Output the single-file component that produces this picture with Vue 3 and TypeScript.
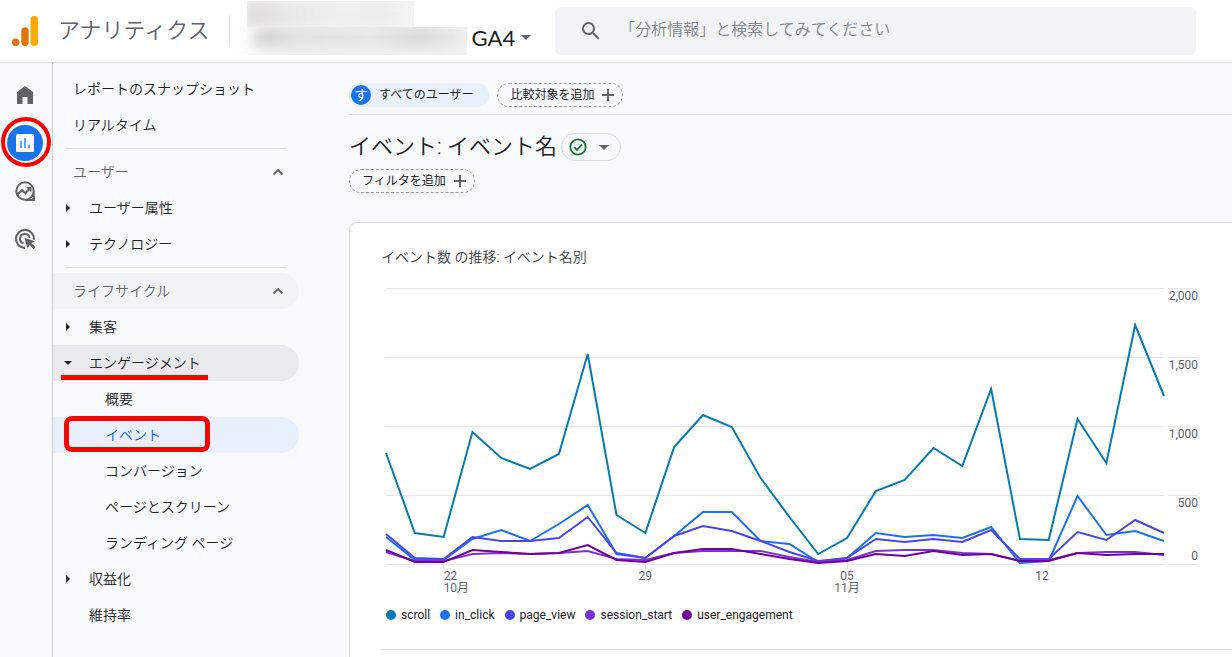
<script setup lang="ts">
interface NavItem {
  label: string
  level: 0 | 1 | 2
  kind?: 'section' | 'closed' | 'open'
  state?: 'hover' | 'parent' | 'current'
  mark?: 'underline' | 'box'
}

const navGroups: NavItem[][] = [
  [
    { label: 'レポートのスナップショット', level: 0 },
    { label: 'リアルタイム', level: 0 },
  ],
  [
    { label: 'ユーザー', level: 0, kind: 'section' },
    { label: 'ユーザー属性', level: 1, kind: 'closed' },
    { label: 'テクノロジー', level: 1, kind: 'closed' },
  ],
  [
    { label: 'ライフサイクル', level: 0, kind: 'section', state: 'hover' },
    { label: '集客', level: 1, kind: 'closed' },
    { label: 'エンゲージメント', level: 1, kind: 'open', state: 'parent', mark: 'underline' },
    { label: '概要', level: 2 },
    { label: 'イベント', level: 2, state: 'current', mark: 'box' },
    { label: 'コンバージョン', level: 2 },
    { label: 'ページとスクリーン', level: 2 },
    { label: 'ランディング ページ', level: 2 },
    { label: '収益化', level: 1, kind: 'closed' },
    { label: '維持率', level: 1 },
  ],
]

interface Series {
  name: string
  color: string
  levels: number[]
}

// Levels are heights above the baseline; PLOT_HEIGHT corresponds to 2,000 events.
const PLOT_HEIGHT = 276
const LAST_DAY = 27

const series: Series[] = [
  {
    name: 'scroll',
    color: '#077bb0',
    levels: [111, 31, 27, 132, 106, 95, 110, 210, 49, 31, 117, 149, 137, 86, 47, 10, 26, 73, 84, 116, 98, 175, 25, 24, 145, 101, 239, 168],
  },
  {
    name: 'in_click',
    color: '#1a73e8',
    levels: [27, 4, 4, 25, 34, 23, 40, 59, 10, 6, 28, 52, 52, 23, 20, 2, 6, 31, 27, 29, 26, 37, 1, 3, 68, 29, 33, 23],
  },
  {
    name: 'page_view',
    color: '#4a45ea',
    levels: [30, 6, 5, 27, 23, 23, 26, 47, 11, 6, 28, 38, 33, 23, 12, 3, 6, 25, 22, 25, 22, 34, 5, 5, 32, 24, 44, 31],
  },
  {
    name: 'session_start',
    color: '#7a33d1',
    levels: [12, 3, 3, 10, 11, 10, 11, 13, 5, 4, 11, 13, 13, 13, 7, 2, 4, 13, 14, 14, 11, 10, 3, 4, 11, 12, 12, 9],
  },
  {
    name: 'user_engagement',
    color: '#72009c',
    levels: [14, 2, 2, 14, 12, 10, 11, 19, 4, 2, 11, 15, 15, 10, 5, 1, 3, 10, 8, 13, 9, 10, 3, 3, 11, 9, 10, 10],
  },
]

const points = (levels: number[]): string =>
  levels.map((v, day) => `${day},${PLOT_HEIGHT - v}`).join(' ')

const gridRows = [0, 69, 138, 207, 276]
const axisLabels = ['2,000', '1,500', '1,000', '500']

const ticks = [
  { day: 2, label: '22', month: '10月', align: 'start' },
  { day: 9, label: '29', month: '', align: 'middle' },
  { day: 16, label: '05', month: '11月', align: 'middle' },
  { day: 23, label: '12', month: '', align: 'end' },
]

const dayOffset = (day: number): string => `${(day / LAST_DAY) * 100}%`
</script>

<template>
  <div class="app">
    <header class="topbar">
      <svg class="logo" viewBox="0 0 26 30" aria-hidden="true">
        <rect x="18.5" y="0" width="7.5" height="30" rx="3.7" fill="#f9ab00" />
        <rect x="9.3" y="11.3" width="7.4" height="18.7" rx="3.7" fill="#e37400" />
        <circle cx="3.7" cy="26.3" r="3.7" fill="#e37400" />
      </svg>
      <span class="product">アナリティクス</span>
      <div class="account" aria-hidden="true">
        <div class="redacted top"><i></i></div>
        <div class="redacted bottom"><i></i></div>
      </div>
      <button class="property" type="button">
        GA4
        <svg viewBox="0 0 10 5" class="caret" aria-hidden="true"><path d="M0 0h10L5 5z" /></svg>
      </button>
      <label class="search">
        <svg viewBox="0 0 24 24" aria-hidden="true">
          <path d="M15.5 14h-.79l-.28-.27A6.47 6.47 0 0 0 16 9.5 6.5 6.5 0 1 0 9.5 16c1.61 0 3.09-.59 4.23-1.57l.27.28v.79l5 4.99L20.49 19l-4.99-5zm-6 0C7.01 14 5 11.99 5 9.5S7.01 5 9.5 5 14 7.01 14 9.5 11.99 14 9.5 14z" />
        </svg>
        <input type="search" aria-label="検索" placeholder="「分析情報」と検索してみてください" />
      </label>
    </header>

    <div class="body">
      <nav class="rail" aria-label="メイン">
        <a href="#home" aria-label="ホーム">
          <svg viewBox="0 0 24 24"><path d="M4 21V9l8-6 8 6v12h-5.500v-7h-5v7z" /></svg>
        </a>
        <a href="#reports" class="active" aria-label="レポート">
          <span class="disc">
            <svg viewBox="0 0 18 18">
              <rect width="18" height="18" rx="1.500" fill="#fff" />
              <path d="M5 7v7M9 4v10M13 10.500v3.500" fill="none" stroke="#1a73e8" stroke-width="1.300" />
            </svg>
          </span>
          <span class="ring"></span>
        </a>
        <a href="#explore" aria-label="探索">
          <svg viewBox="0 0 24 24">
            <path d="M20.700 12.500V21H12.500M20.700 12A8.700 8.700 0 1 1 12 3.300 8.700 8.700 0 0 1 20.700 12z" fill="none" stroke="#5f6368" stroke-width="2" />
            <path d="M17 21.800 21.500 17v4.800z" />
            <path d="M4.500 15.500 9 11.200l3.300 3.100L17 9.200" fill="none" stroke="#5f6368" stroke-width="2.200" />
            <path d="M12.800 7.700h5.700v5.700z" />
          </svg>
        </a>
        <a href="#ads" aria-label="広告">
          <svg viewBox="0 0 24 24">
            <path d="M12 20.900A9 9 0 1 1 20.900 12.800M10.500 16.400A4.800 4.800 0 1 1 16.600 11" fill="none" stroke="#5f6368" stroke-width="2.100" />
            <path d="M11.300 10.800 22 14.300l-3.700 1.800 4.200 4.200-1.900 1.900-4.200-4.200-1.700 3.800z" />
          </svg>
        </a>
      </nav>

      <nav class="sidebar" aria-label="レポート">
        <ul v-for="(group, g) in navGroups" :key="g">
          <li v-for="item in group" :key="item.label">
            <a
              :href="'#' + item.label"
              :class="['item', 'level-' + item.level, item.kind, item.state, item.mark]"
              :aria-current="item.state === 'current' ? 'page' : undefined"
            >
              <svg v-if="item.kind === 'closed'" class="arrow" viewBox="0 0 10 10"><path d="M3 1v8l4-4z" /></svg>
              <svg v-if="item.kind === 'open'" class="arrow" viewBox="0 0 10 10"><path d="M1 3h8L5 7z" /></svg>
              <span>{{ item.label }}</span>
              <svg v-if="item.kind === 'section'" class="chevron" viewBox="0 0 12 8">
                <path d="M1.500 6.500 6 2l4.500 4.500" fill="none" stroke="#5f6368" stroke-width="1.800" />
              </svg>
            </a>
          </li>
        </ul>
      </nav>

      <main class="main">
        <div class="comparisons">
          <button class="chip audience" type="button"><b>す</b>すべてのユーザー</button>
          <button class="chip dashed" type="button">
            比較対象を追加
            <svg viewBox="0 0 12 12" class="plus"><path d="M6 0v12M0 6h12" /></svg>
          </button>
        </div>

        <div class="heading">
          <h1>イベント: イベント名</h1>
          <button class="status" type="button" aria-label="データの状態">
            <svg viewBox="0 0 18 18" class="check">
              <circle cx="9" cy="9" r="7.700" />
              <path d="M5.200 9.200l2.700 2.700 5.200-5.400" />
            </svg>
            <svg viewBox="0 0 10 5" class="caret"><path d="M0 0h10L5 5z" /></svg>
          </button>
        </div>
        <button class="chip dashed" type="button">
          フィルタを追加
          <svg viewBox="0 0 12 12" class="plus"><path d="M6 0v12M0 6h12" /></svg>
        </button>

        <section class="card">
          <h2>イベント数 の推移: イベント名別</h2>
          <div class="chart">
            <div class="plot">
              <svg viewBox="0 0 27 276" preserveAspectRatio="none" role="img" aria-label="イベント数 の推移">
                <line v-for="y in gridRows" :key="y" class="grid" x1="0" x2="27" :y1="y" :y2="y" />
                <line v-for="t in ticks" :key="t.day" class="grid" :x1="t.day" :x2="t.day" y1="276" y2="281" />
                <polyline v-for="s in series" :key="s.name" :points="points(s.levels)" :stroke="s.color" />
              </svg>
              <div class="days">
                <span v-for="t in ticks" :key="t.day" :class="t.align" :style="{ left: dayOffset(t.day) }">
                  {{ t.label }}<br />{{ t.month }}
                </span>
              </div>
            </div>
            <div class="axis">
              <div v-for="label in axisLabels" :key="label"><span>{{ label }}</span></div>
              <span class="zero">0</span>
            </div>
          </div>
          <ul class="legend">
            <li v-for="s in series" :key="s.name"><i :style="{ background: s.color }"></i>{{ s.name }}</li>
          </ul>
          <hr />
        </section>
      </main>
    </div>
  </div>
</template>

<style>
body {
  margin: 0;
  background: #f8f9fb;
}
</style>

<style scoped>
.app {
  display: flex;
  flex-direction: column;
  min-height: 100vh;
  color: #202124;
  font: 14px/20px Roboto, "Noto Sans CJK JP", sans-serif;
}
.app *,
.app *::before,
.app *::after {
  box-sizing: border-box;
}
a {
  color: inherit;
  text-decoration: none;
}
button {
  padding: 0;
  border: 0;
  background: none;
  color: inherit;
  font: inherit;
  cursor: pointer;
}
ul {
  margin: 0;
  padding: 0;
  list-style: none;
}
svg {
  flex: none;
  fill: #5f6368;
}
.caret {
  width: 10px;
  height: 5px;
}

/* Top bar */
.topbar {
  display: flex;
  align-items: center;
  height: 63px;
  padding: 0 36px 0 12px;
  border-bottom: 1px solid #dadce0;
  background: #fff;
}
.logo {
  width: 26px;
  height: 30px;
}
.product {
  margin-left: 20px;
  padding-right: 19px;
  border-right: 1px solid #dadce0;
  color: #5f6368;
  font-size: 22px;
  font-weight: 350;
  line-height: 32px;
  white-space: nowrap;
}
.account {
  width: 232px;
  margin: 1px 5px auto;
}
.redacted {
  overflow: hidden;
}
.redacted i {
  display: block;
  height: 100%;
  filter: blur(6px);
}
.redacted.top {
  width: 167px;
  height: 26px;
  margin-left: 12px;
  background: #f4f4f4;
}
.redacted.top i {
  background: linear-gradient(90deg, #dcd9da, #e8e7e7 24%, #efefef 60%, #ebebeb 80%, #f4f4f4);
}
.redacted.bottom {
  height: 28px;
  background: linear-gradient(90deg, #fff, #f0f0f0 25%, #f2f2f2);
}
.redacted.bottom i {
  height: 20px;
  background: linear-gradient(90deg, #fff 4%, #d2d2d2 12%, #d8d8d8 18%, #e2e2e2 26%, #e6e6e6 60%, #d9d9d9 80%, #eee);
}
.property {
  display: flex;
  align-items: center;
  gap: 6px;
  padding-top: 13px;
  font-family: Lato, sans-serif;
  font-size: 22px;
  line-height: 28px;
}
.search {
  display: flex;
  flex: 1;
  align-items: center;
  gap: 16px;
  height: 48px;
  margin-left: 24px;
  padding: 0 24px;
  border-radius: 6px;
  background: #f1f3f4;
}
.search svg {
  width: 24px;
  height: 24px;
}
.search input {
  flex: 1;
  min-width: 0;
  padding: 0 0 2px;
  border: 0;
  outline: 0;
  background: none;
  font: 350 16px/24px Roboto, "Noto Sans CJK JP", sans-serif;
}
.search input::placeholder {
  color: #80868b;
  opacity: 1;
}

/* Icon rail */
.body {
  display: flex;
  flex: 1;
}
.rail {
  flex: none;
  width: 53px;
  padding: 8px 2px 0 0;
  border-right: 1px solid #c8cacd;
}
.rail a {
  position: relative;
  display: flex;
  align-items: center;
  justify-content: center;
  height: 48px;
}
.rail svg {
  width: 24px;
  height: 24px;
}
.disc {
  display: flex;
  align-items: center;
  justify-content: center;
  width: 36px;
  height: 36px;
  border-radius: 50%;
  background: #1a73e8;
}
.rail .disc svg {
  width: 18px;
  height: 18px;
}
.ring {
  position: absolute;
  inset: -2px -1px 0 1px;
  border: 4px solid #f00;
  border-radius: 50%;
}

/* Report navigation */
.sidebar {
  flex: none;
  width: 246px;
  padding-top: 8px;
  font-weight: 350;
}
.sidebar ul + ul::before {
  content: "";
  display: block;
  height: 1px;
  margin: 5px 12px;
  background: #dadce0;
}
.item {
  position: relative;
  display: flex;
  align-items: center;
  height: 36px;
  padding-right: 15px;
  border-radius: 0 18px 18px 0;
  white-space: nowrap;
}
.level-0 {
  padding-left: 20px;
}
.level-1 {
  padding-left: 36px;
}
.level-2 {
  padding-left: 52px;
}
.section {
  justify-content: space-between;
  color: #5f6368;
}
.hover {
  background: #f1f3f4;
}
.parent {
  background: #e8eaed;
}
.current {
  background: #e8f0fe;
  color: #1967d2;
}
.arrow {
  width: 10px;
  height: 10px;
  margin: 0 16px 0 -26px;
  fill: #202124;
}
.chevron {
  width: 12px;
  height: 8px;
}
.underline::after {
  content: "";
  position: absolute;
  bottom: 1px;
  left: 8px;
  width: 147px;
  height: 5px;
  background: #f00;
}
.box::after {
  content: "";
  position: absolute;
  top: -1px;
  left: 11px;
  width: 146px;
  height: 36px;
  border: 5px solid #f00;
  border-radius: 8px;
}

/* Report */
.main {
  display: flex;
  flex: 1;
  flex-direction: column;
  align-items: flex-start;
  min-width: 0;
  margin-left: 50px;
}
.comparisons {
  display: flex;
  align-self: stretch;
  gap: 8px;
  padding: 20px 0 7px;
  border-bottom: 1px solid #dadce0;
}
.chip {
  display: flex;
  align-items: center;
  height: 24px;
  border-radius: 12px;
  font-size: 12px;
  line-height: 16px;
  white-space: nowrap;
}
.audience {
  gap: 8px;
  padding: 0 16px 0 2px;
  background: #e8f0fe;
}
.audience b {
  width: 20px;
  height: 20px;
  border-radius: 50%;
  background: #1a73e8;
  color: #fff;
  font-size: 14px;
  font-weight: 400;
  line-height: 20px;
}
.dashed {
  gap: 8px;
  padding: 0 8px 0 12px;
  border: 1px dashed #9aa0a6;
}
.plus {
  width: 12px;
  height: 12px;
  stroke: #5f6368;
  stroke-width: 2;
}
.heading {
  display: flex;
  align-items: center;
  gap: 4px;
  margin: 16px 0 6px;
}
h1 {
  margin: 0;
  font-size: 22px;
  font-weight: 350;
  line-height: 32px;
}
.status {
  display: flex;
  align-items: center;
  justify-content: space-between;
  width: 60px;
  height: 28px;
  padding: 0 11px 0 7px;
  border: 1px solid #dadce0;
  border-radius: 14px;
}
.check {
  width: 18px;
  height: 18px;
  fill: none;
  stroke: #137333;
  stroke-width: 1.8;
}
.card {
  flex: 1;
  align-self: stretch;
  margin-top: 29px;
  padding: 24px 0 0 31px;
  border: solid #dadce0;
  border-width: 1px 0 0 1px;
  border-radius: 8px 0 0;
  background: #fff;
}
h2 {
  margin: 0;
  color: #3c4043;
  font-size: 14px;
  font-weight: 350;
  line-height: 20px;
}
.chart {
  display: flex;
  gap: 4px;
  margin: 21px 34px 0 5px;
  color: #5f6368;
  font-size: 12px;
}
.plot {
  flex: 1;
  min-width: 0;
}
.plot svg {
  display: block;
  width: 100%;
  height: 276px;
  overflow: visible;
}
.plot line,
.plot polyline {
  fill: none;
  vector-effect: non-scaling-stroke;
}
.plot polyline {
  stroke-width: 2;
}
.grid {
  stroke: #e6e6e6;
  stroke-width: 1;
  shape-rendering: crispEdges;
}
.days {
  position: relative;
  height: 36px;
  line-height: 12px;
}
.days span {
  position: absolute;
  top: 6px;
  white-space: nowrap;
}
.days .middle {
  transform: translateX(-50%);
  text-align: center;
}
.days .end {
  transform: translateX(-100%);
}
.axis {
  position: relative;
  width: 30px;
  height: 277px;
  border-bottom: 1px solid #e6e6e6;
  line-height: 14px;
  text-align: right;
}
.axis div {
  height: 69px;
  border-top: 1px solid #e6e6e6;
}
.axis .zero {
  position: absolute;
  right: 0;
  bottom: 1px;
}
.legend {
  display: flex;
  gap: 10px;
  margin: 7px 0 26px 5px;
  font-size: 12px;
  line-height: 16px;
}
.legend li {
  display: flex;
  align-items: center;
  gap: 5px;
}
.legend i {
  width: 10px;
  height: 10px;
  border-radius: 50%;
}
hr {
  height: 1px;
  margin: 0;
  border: 0;
  background: #dadce0;
}
</style>
